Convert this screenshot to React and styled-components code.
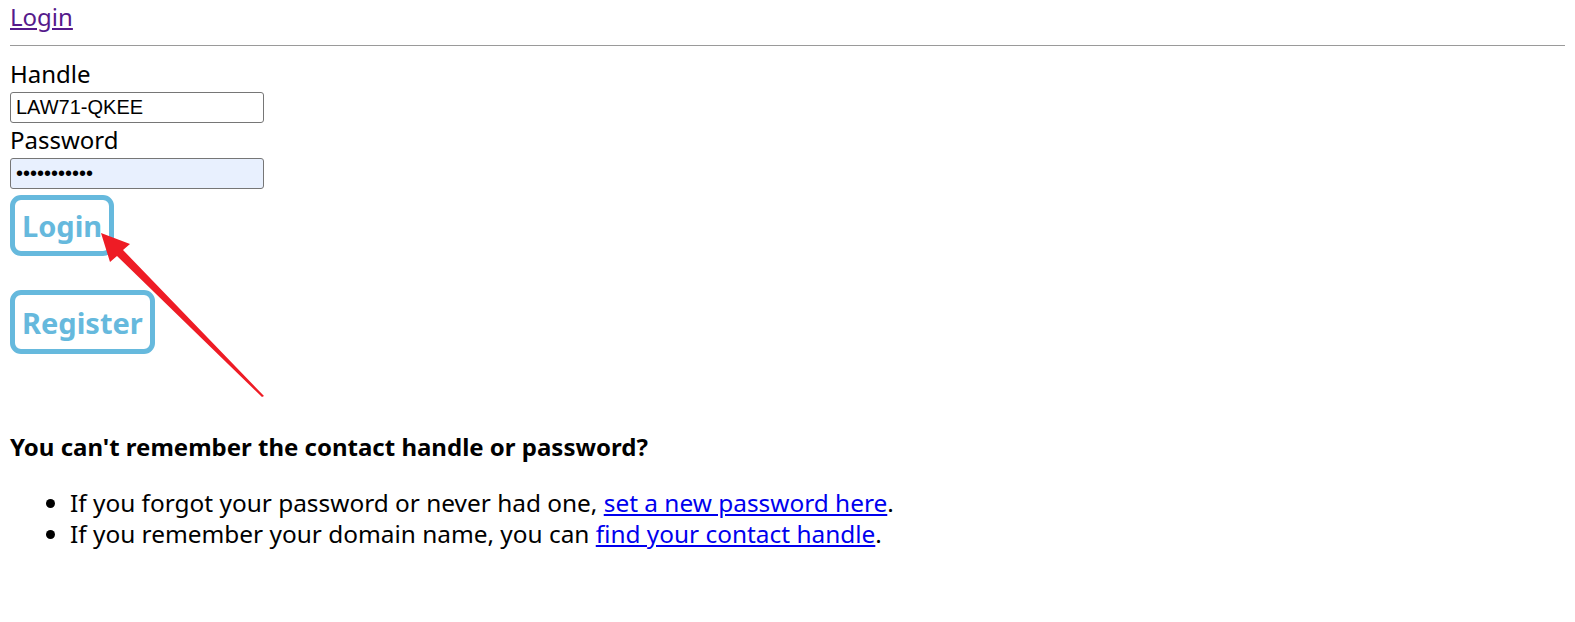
import styled, { createGlobalStyle } from "styled-components";

const GlobalStyle = createGlobalStyle`
	body {
		margin: 0;
		padding: 0 10px;
		background: #ffffff;
		color: #000000;
		font-family: "Noto Sans", "Open Sans", sans-serif;
		font-size: 24px;
	}
`;

const Page = styled.div`
	position: relative;
	height: 622px;
`;

const TopLink = styled.a`
	display: inline-block;
	line-height: 32px;
	color: #551a8b;
	text-decoration: underline;
`;

const Rule = styled.hr`
	margin: 12px 0 0;
	border: 0;
	border-top: 1px solid #9a9a9a;
	height: 0;
`;

const Form = styled.form`
	display: flex;
	flex-direction: column;
	align-items: flex-start;
	margin-top: 12px;
`;

const Label = styled.label`
	line-height: 32px;
`;

const Input = styled.input`
	box-sizing: border-box;
	width: 254px;
	height: 31px;
	margin: 2px 0 1px;
	padding: 0 5px;
	border: 1px solid #767676;
	border-radius: 3px;
	font-family: "Liberation Sans", Arial, sans-serif;
	font-size: 20px;
	color: #000000;
	background: ${(props) => (props.$autofilled ? "#e8f0fe" : "#ffffff")};
`;

const Button = styled.button`
	box-sizing: border-box;
	height: ${(props) => props.$h}px;
	margin-top: ${(props) => props.$top}px;
	padding: 0 7px;
	border: 5px solid #66b9dd;
	border-radius: 11px;
	background: #ffffff;
	color: #66b9dd;
	font-family: "Noto Sans", "Open Sans", sans-serif;
	font-weight: 700;
	font-size: 29px;
	line-height: 1;
	cursor: pointer;
`;

const Help = styled.h3`
	margin: 77px 0 0;
	font-size: 24px;
	font-weight: 700;
	line-height: 32px;
`;

const HelpList = styled.ul`
	margin: 24px 0 0;
	padding-left: 60px;
	font-size: 24.4px;
	line-height: 31px;
`;

const TextLink = styled.a`
	color: #0000ee;
	text-decoration: underline;
`;

const Arrow = styled.svg`
	position: absolute;
	left: -10px;
	top: 0;
	pointer-events: none;
`;

export default function App() {
	return (
		<Page>
			<GlobalStyle />
			<TopLink href="#">Login</TopLink>
			<Rule />
			<Form onSubmit={(e) => e.preventDefault()}>
				<Label htmlFor="handle">Handle</Label>
				<Input id="handle" defaultValue="LAW71-QKEE" />
				<Label htmlFor="password">Password</Label>
				<Input id="password" type="password" defaultValue="abcdefghijk" $autofilled />
				<Button type="submit" $h={61} $top={5}>
					Login
				</Button>
				<Button type="button" $h={64} $top={34}>
					Register
				</Button>
			</Form>
			<Help>You can't remember the contact handle or password?</Help>
			<HelpList>
				<li>
					If you forgot your password or never had one,{" "}
					<TextLink href="#">set a new password here</TextLink>.
				</li>
				<li>
					If you remember your domain name, you can{" "}
					<TextLink href="#">find your contact handle</TextLink>.
				</li>
			</HelpList>
			<Arrow width="300" height="420" viewBox="0 0 300 420">
				<polygon
					points="101,233 130,244 123,250 264,396 262,397 117,256 110,262"
					fill="#ee1c25"
				/>
			</Arrow>
		</Page>
	);
}
